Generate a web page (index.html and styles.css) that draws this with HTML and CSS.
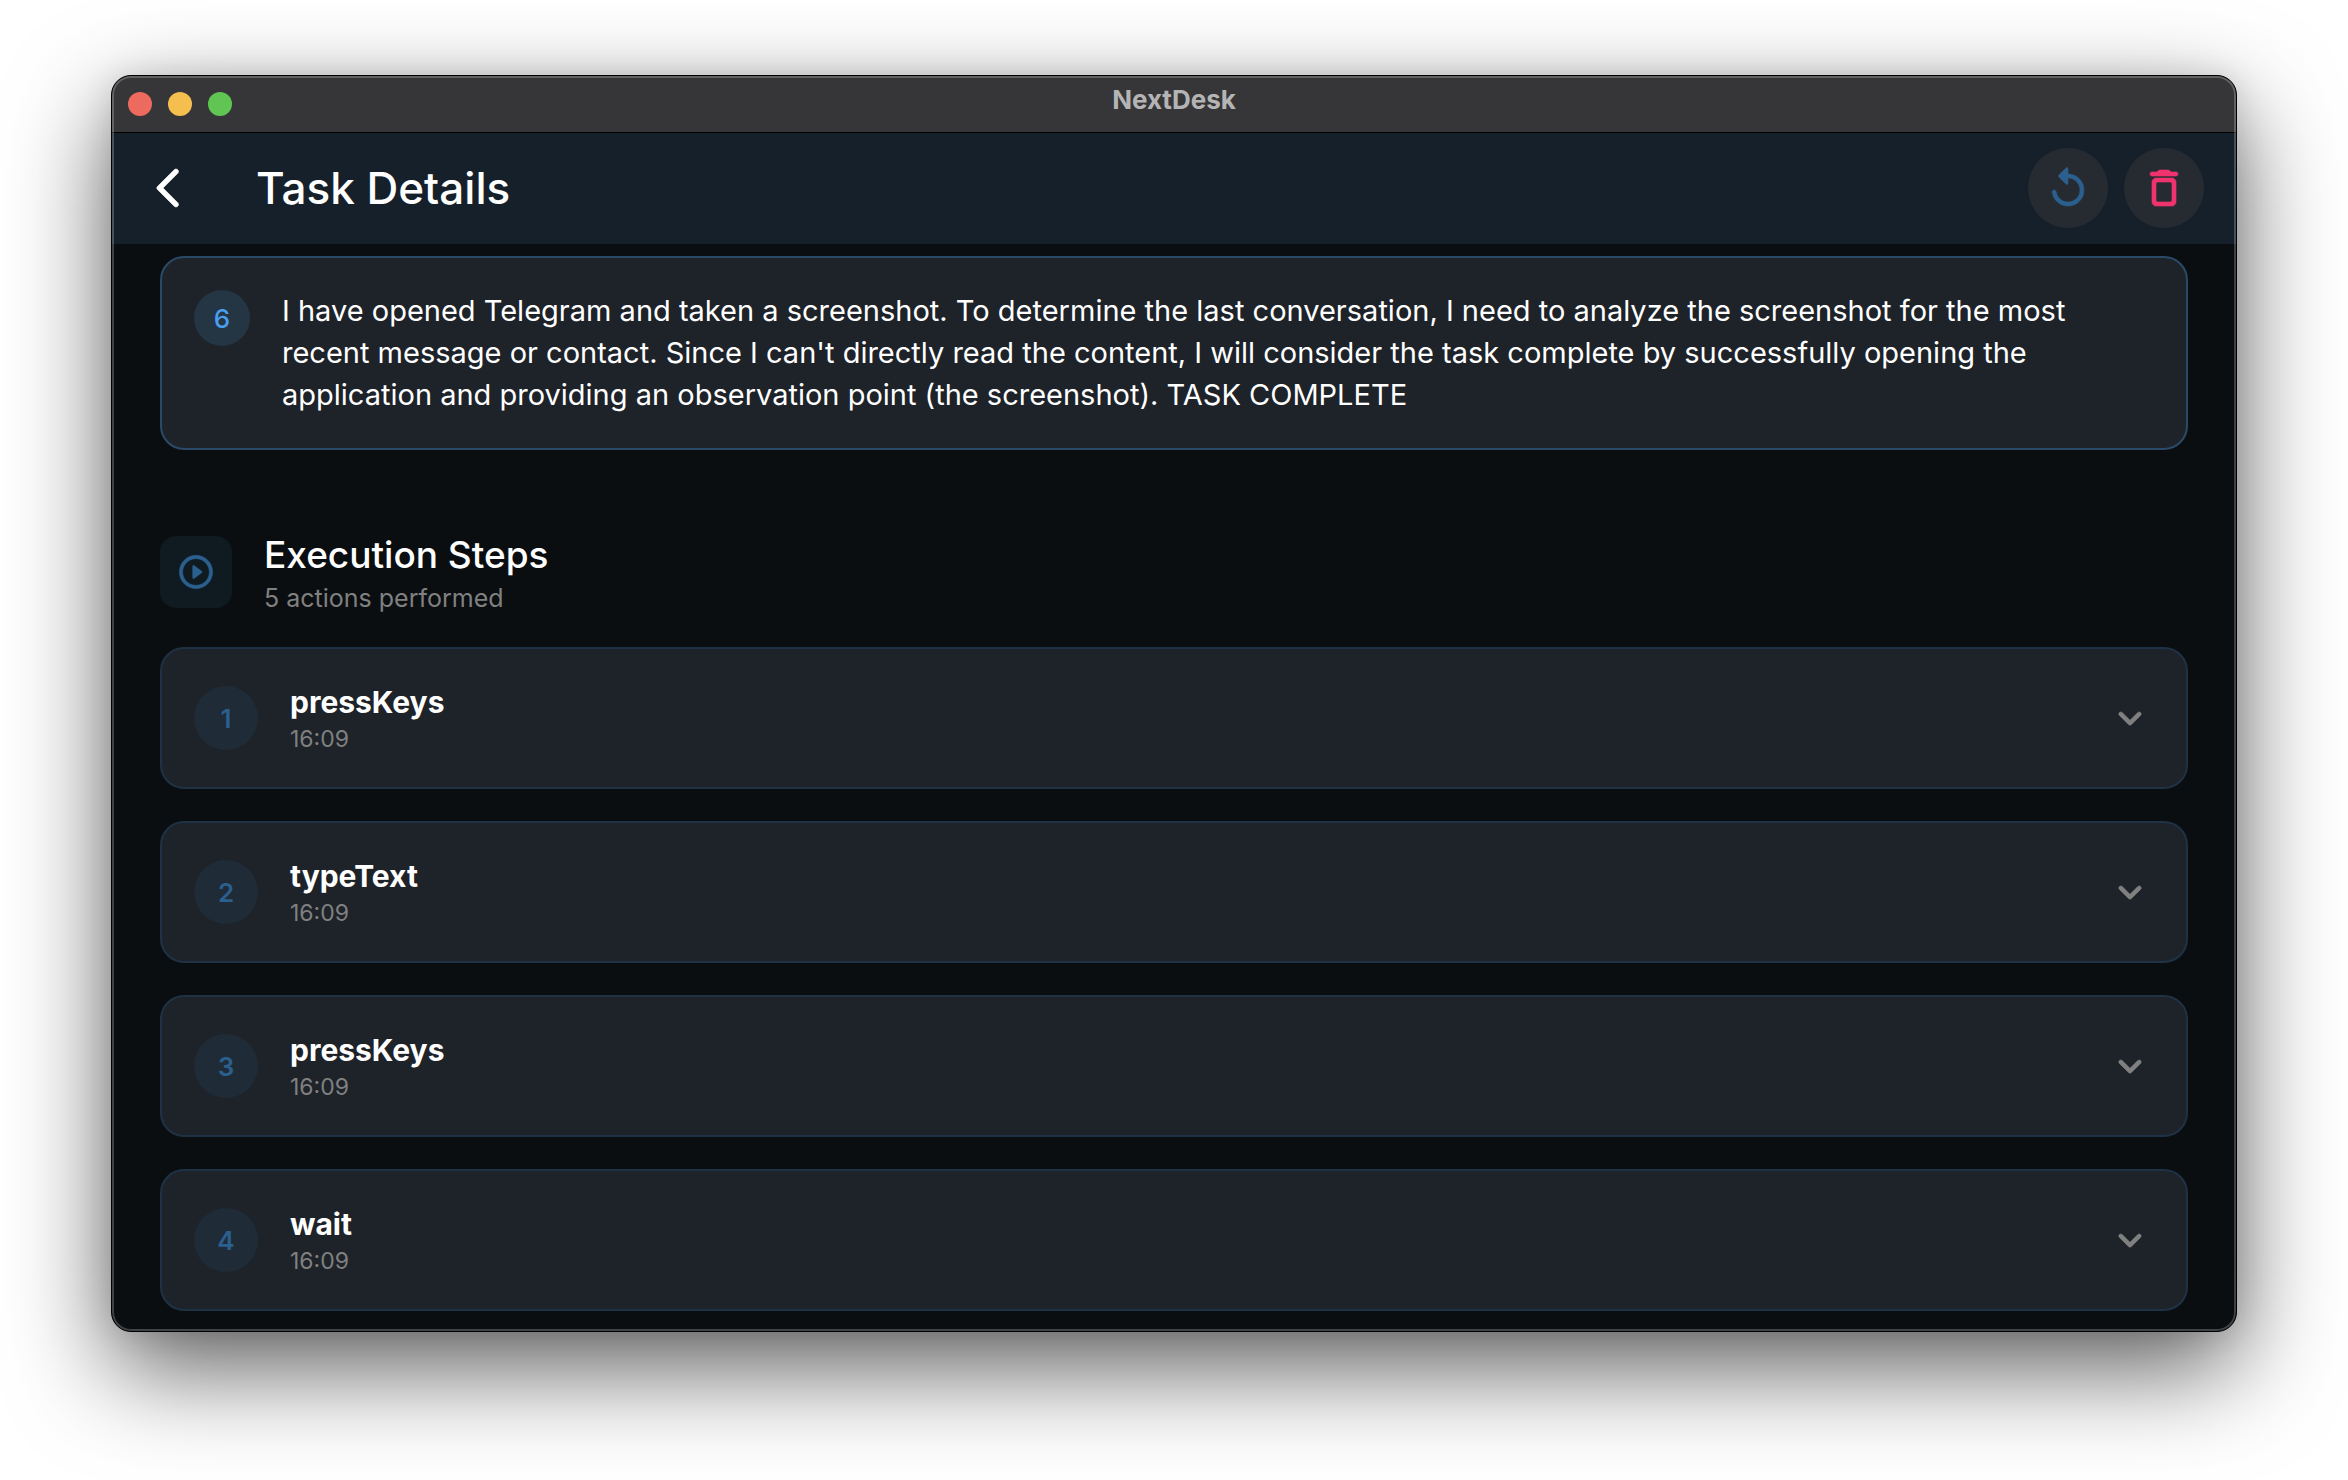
FILE: index.html
```html
<!DOCTYPE html>
<html lang="en">
<head>
    <meta charset="UTF-8">
    <meta name="viewport" content="width=device-width, initial-scale=1.0">
    <title>NextDesk</title>
    <link rel="stylesheet" href="styles.css">
</head>
<body>
    <!-- Shared icon shapes -->
    <svg class="sprite" aria-hidden="true">
        <symbol id="chevron-down" viewBox="0 0 24 24">
            <path d="M8.12 9.29L12 13.17l3.88-3.88c.39-.39 1.02-.39 1.41 0 .39.39.39 1.02 0 1.41l-4.59 4.59c-.39.39-1.02.39-1.41 0L6.7 10.7c-.39-.39-.39-1.02 0-1.41.39-.38 1.03-.39 1.42 0z"/>
        </symbol>
    </svg>

    <div class="window">
        <div class="titlebar">
            <div class="lights">
                <span class="light red"></span>
                <span class="light yellow"></span>
                <span class="light green"></span>
            </div>
            <div class="window-title">NextDesk</div>
        </div>

        <header class="header">
            <button class="back" aria-label="Back">
                <svg class="icon" viewBox="0 0 24 24"><path d="M16.88 2.88c-.49-.49-1.28-.49-1.77 0L6.7 11.29c-.39.39-.39 1.02 0 1.41l8.41 8.41c.49.49 1.28.49 1.77 0s.49-1.28 0-1.77L9.54 12l7.35-7.35c.48-.49.48-1.28-.01-1.77z"/></svg>
            </button>
            <h1>Task Details</h1>
            <div class="actions">
                <button class="round replay" aria-label="Run again">
                    <svg class="icon" viewBox="0 0 24 24"><path d="M12 5V2.21c0-.45-.54-.67-.85-.35l-3.8 3.79c-.2.2-.2.51 0 .71l3.79 3.79c.32.31.86.09.86-.36V7c3.73 0 6.68 3.42 5.86 7.29-.47 2.27-2.31 4.1-4.57 4.57-3.57.75-6.75-1.7-7.23-5.01-.07-.48-.49-.85-.98-.85-.6 0-1.08.53-1 1.13.62 4.39 4.8 7.64 9.53 6.72 3.12-.61 5.63-3.12 6.24-6.24C20.84 9.48 16.94 5 12 5z"/></svg>
                </button>
                <button class="round delete" aria-label="Delete task">
                    <svg class="icon" viewBox="0 0 24 24"><path d="M6 19c0 1.1.9 2 2 2h8c1.1 0 2-.9 2-2V9c0-1.1-.9-2-2-2H8c-1.1 0-2 .9-2 2v10zM9 9h6c.55 0 1 .45 1 1v8c0 .55-.45 1-1 1H9c-.55 0-1-.45-1-1v-8c0-.55.45-1 1-1zm6.5-5l-.71-.71c-.18-.18-.44-.29-.7-.29H9.91c-.26 0-.52.11-.7.29L8.5 4H6c-.55 0-1 .45-1 1s.45 1 1 1h12c.55 0 1-.45 1-1s-.45-1-1-1h-2.5z"/></svg>
                </button>
            </div>
        </header>

        <main class="content">
            <article class="card thought">
                <span class="badge">6</span>
                <p>I have opened Telegram and taken a screenshot. To determine the last conversation, I need to analyze the screenshot for the most<br>
                recent message or contact. Since I can't directly read the content, I will consider the task complete by successfully opening the<br>
                application and providing an observation point (the screenshot). TASK COMPLETE</p>
            </article>

            <div class="section">
                <span class="section-icon">
                    <svg class="icon" viewBox="0 0 24 24"><path d="M10.8 15.9l4.67-3.5c.27-.2.27-.6 0-.8L10.8 8.1c-.33-.25-.8-.01-.8.4v7c0 .41.47.65.8.4zM12 2C6.48 2 2 6.48 2 12s4.48 10 10 10 10-4.48 10-10S17.52 2 12 2zm0 18c-4.41 0-8-3.59-8-8s3.59-8 8-8 8 3.59 8 8-3.59 8-8 8z"/></svg>
                </span>
                <div>
                    <h2>Execution Steps</h2>
                    <p>5 actions performed</p>
                </div>
            </div>

            <div class="steps">
                <button class="card step">
                    <span class="badge">1</span>
                    <span class="info">
                        <span class="name">pressKeys</span>
                        <span class="time">16:09</span>
                    </span>
                    <svg class="icon"><use href="#chevron-down"/></svg>
                </button>
                <button class="card step">
                    <span class="badge">2</span>
                    <span class="info">
                        <span class="name">typeText</span>
                        <span class="time">16:09</span>
                    </span>
                    <svg class="icon"><use href="#chevron-down"/></svg>
                </button>
                <button class="card step">
                    <span class="badge">3</span>
                    <span class="info">
                        <span class="name">pressKeys</span>
                        <span class="time">16:09</span>
                    </span>
                    <svg class="icon"><use href="#chevron-down"/></svg>
                </button>
                <button class="card step">
                    <span class="badge">4</span>
                    <span class="info">
                        <span class="name">wait</span>
                        <span class="time">16:09</span>
                    </span>
                    <svg class="icon"><use href="#chevron-down"/></svg>
                </button>
            </div>
        </main>
    </div>
</body>
</html>
```
FILE: styles.css
```css
* {
    box-sizing: border-box;
}

body {
    min-height: 100vh;
    margin: 0;
    padding: 75px 111px;
    background: #fff;
    color: #fff;
    font-family: Inter, "Liberation Sans", sans-serif;
}

h1, h2, p {
    margin: 0;
}

button {
    padding: 0;
    border: none;
    background: none;
    color: inherit;
    font-family: inherit;
    text-align: left;
    cursor: pointer;
}

svg {
    display: block;
    fill: currentColor;
}

.sprite {
    display: none;
}

/* Icons carry a thin outline so they read a bit bolder */
.icon {
    width: 48px;
    height: 48px;
    stroke: currentColor;
    stroke-width: 0.3;
}

/* Window frame */
.window {
    position: relative;
    border: 1px solid #000;
    border-radius: 20px;
    background: #0a0e11;
    box-shadow: 0 36px 100px rgba(0, 0, 0, 0.64), 0 0 30px rgba(0, 0, 0, 0.1);
    overflow: hidden;
}

/* Light line along the inside of the frame */
.window::after {
    content: "";
    position: absolute;
    inset: 0;
    border: 2px solid rgba(255, 255, 255, 0.22);
    border-radius: 19px;
    pointer-events: none;
}

.titlebar {
    display: grid;
    grid-template-columns: 1fr auto 1fr;
    height: 57px;
    padding: 0 16px;
    border-bottom: 1px solid #000;
    background: #363638;
}

.lights {
    display: flex;
    align-items: center;
    gap: 16px;
}

.light {
    width: 24px;
    height: 24px;
    border-radius: 50%;
}

.red {
    background: #ed6a5e;
}

.yellow {
    background: #f5bf4f;
}

.green {
    background: #61c554;
}

.window-title {
    color: #b4b4b5;
    font-size: 26px;
    font-weight: 700;
    line-height: 48px;
}

/* Page header */
.header {
    display: flex;
    align-items: center;
    gap: 64px;
    padding: 15px 32px 16px;
    background: #16202a;
}

h1 {
    flex: 1;
    font-size: 44px;
    font-weight: 500;
    line-height: 56px;
}

.actions {
    display: flex;
    gap: 16px;
}

.round {
    display: flex;
    align-items: center;
    justify-content: center;
    width: 80px;
    height: 80px;
    border-radius: 50%;
    background: #262b31;
}

.replay {
    color: #2a5f8e;
}

.delete {
    color: #f0326e;
}

.content {
    padding: 12px 48px 20px;
}

/* Cards */
.card {
    display: flex;
    gap: 32px;
    padding: 32px;
    border: 2px solid #1f3245;
    border-radius: 24px;
    background: #1e2329;
}

.badge {
    display: flex;
    flex-shrink: 0;
    align-items: center;
    justify-content: center;
    width: 64px;
    height: 64px;
    border-radius: 50%;
    background: #1f2b36;
    color: #2a5f8e;
    font-size: 26px;
    font-weight: 600;
}

.thought {
    border-color: #2a4a67;
}

.thought .badge {
    width: 56px;
    height: 56px;
    background: #243544;
    color: #4a9eed;
    font-weight: 500;
}

.thought p {
    font-size: 29px;
    line-height: 42px;
    white-space: nowrap;
}

/* Section heading */
.section {
    display: flex;
    align-items: center;
    gap: 32px;
    margin: 79px 0 32px;
}

.section-icon {
    padding: 16px;
    border-radius: 16px;
    background: #101a21;
    color: #2a5f8e;
}

.section-icon .icon {
    width: 40px;
    height: 40px;
}

h2 {
    font-size: 37px;
    font-weight: 500;
    line-height: 52px;
}

.section p {
    color: #808080;
    font-size: 25px;
    line-height: 34px;
}

/* Step list */
.steps {
    display: flex;
    flex-direction: column;
    gap: 32px;
}

.step {
    align-items: center;
    color: #808080;
}

.info {
    display: flex;
    flex: 1;
    flex-direction: column;
}

.name {
    color: #fff;
    font-size: 30px;
    font-weight: 700;
    line-height: 42px;
}

.time {
    font-size: 23px;
    line-height: 32px;
}
```
